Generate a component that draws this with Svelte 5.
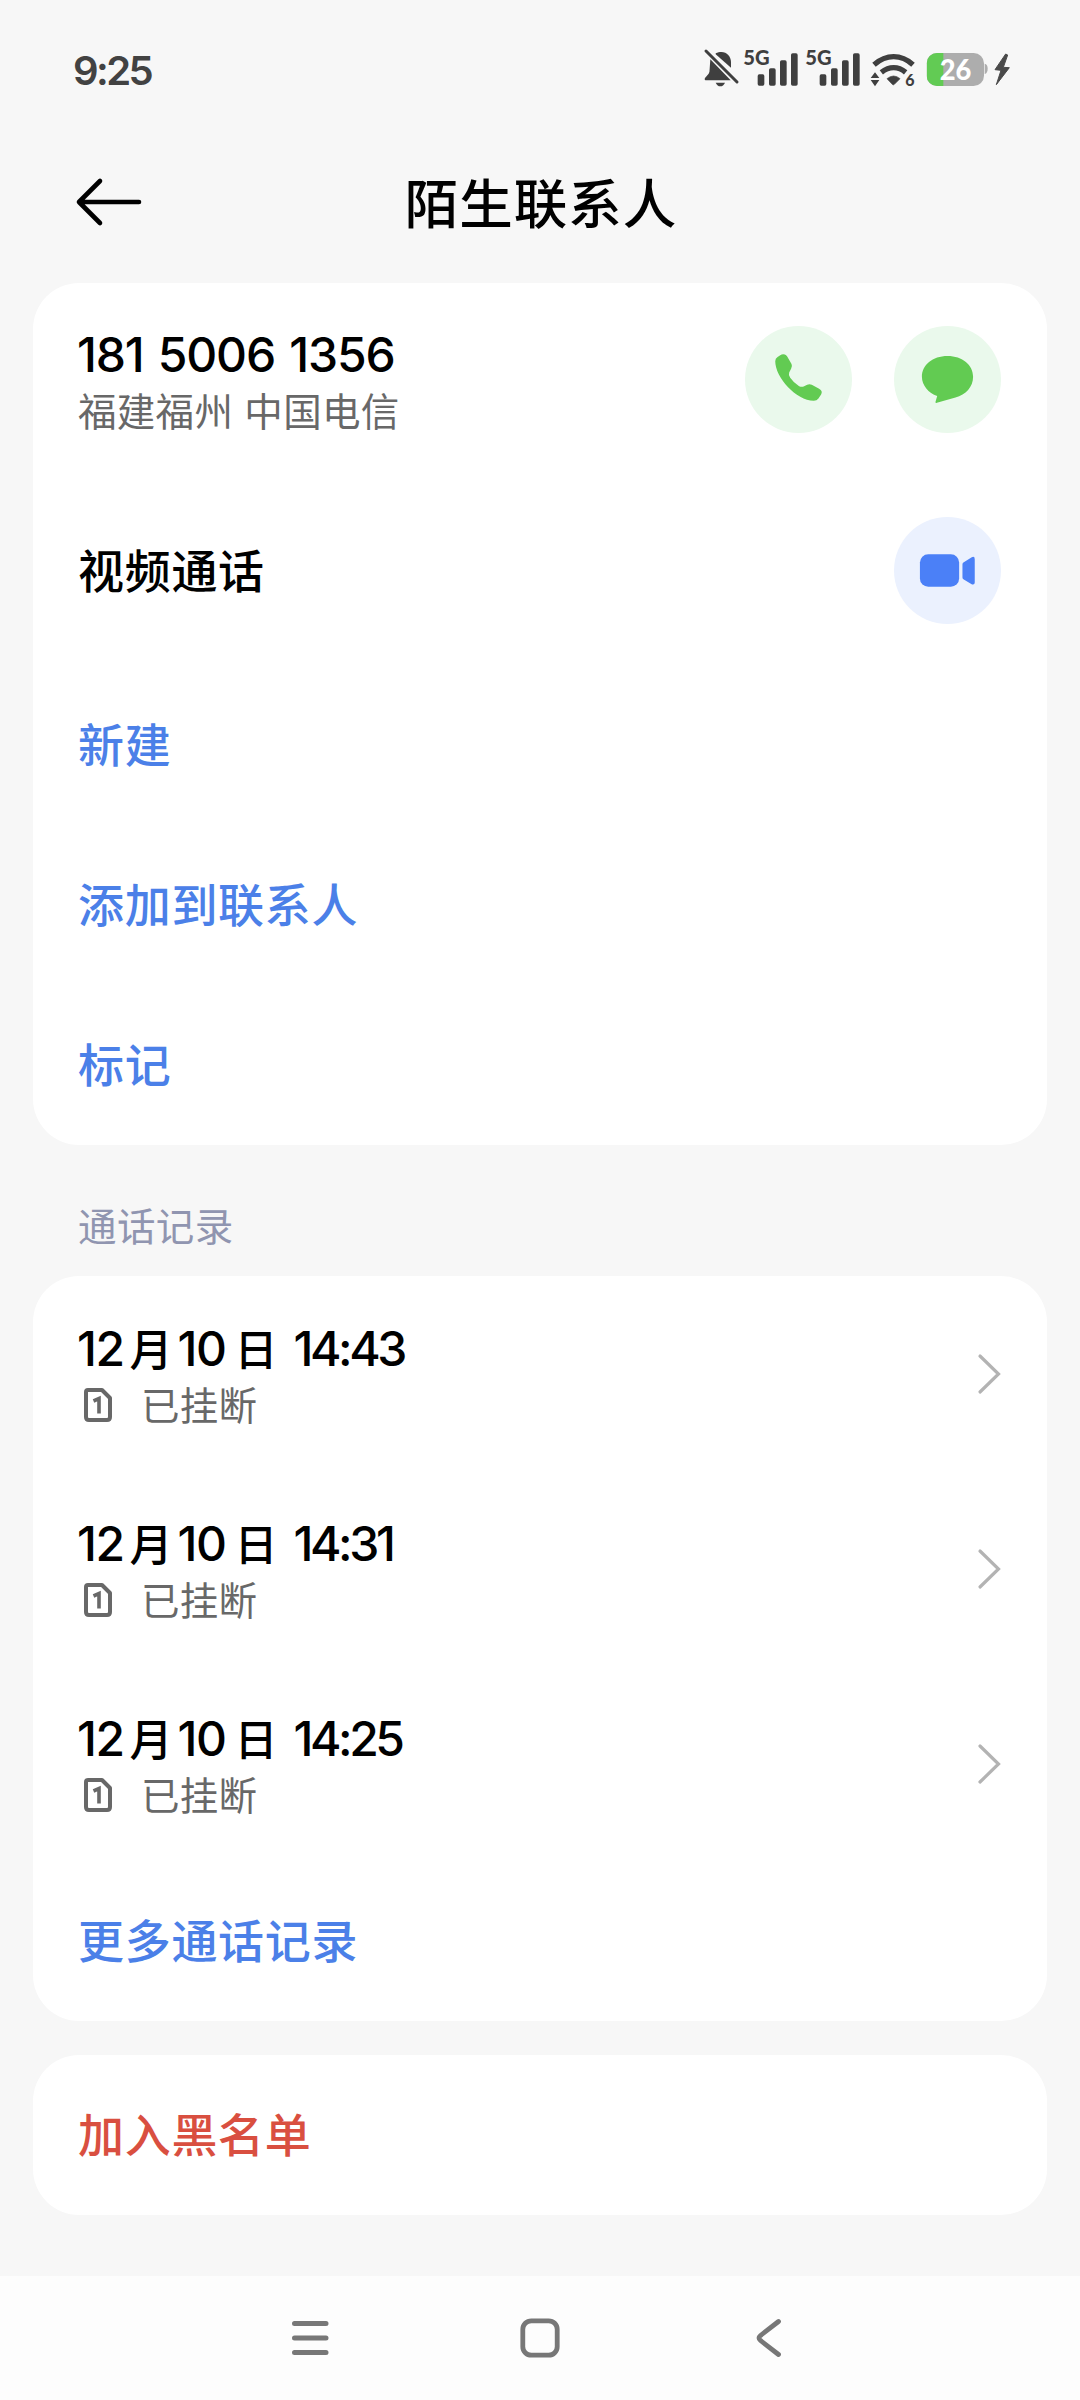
<script lang="ts">
  const actions = ['新建', '添加到联系人', '标记'];
  const calls = ['14:43', '14:31', '14:25'];
  const bars = [
    { x: 0, y: 133 },
    { x: 34, y: 115 },
    { x: 67, y: 91 },
    { x: 100, y: 70 }
  ];
</script>

<div class="screen">
  <header class="status">
    <span class="clock">9:25</span>
    <svg class="indicators" viewBox="60 48 936 126" width="312" height="42">
      <g fill="#3f3f3f">
        <path d="M107 70C131 58 153 72 153 97V113L107 73Z" />
        <path d="M91 88L152 151H76Q72 148 75 144L86 131Q89 127 89 116Z" />
        <path d="M107 158H135Q130 169 121 169T107 158Z" />
        <path d="M78 63L171 156" fill="none" stroke="#3f3f3f" stroke-width="9" stroke-linecap="round" />
        {#each [233, 419] as left}
          <text class="net" x={left - 43} y="105" textLength="79" lengthAdjust="spacingAndGlyphs">5G</text>
          {#each bars as b}
            <rect x={left + b.x} y={b.y} width="20" height={167 - b.y} rx="5" />
          {/each}
        {/each}
        <g fill="none" stroke="#3f3f3f" stroke-width="16">
          <path d="M582 104Q610 80 641 80T699 104" />
          <path d="M604 127Q622 113 641 113T677 127" />
        </g>
        <path d="M621 146Q641 130 660 146L643 163Q640 166 637 163Z" stroke="#3f3f3f" stroke-width="2" />
        <path d="M572 144L585 127L598 144ZM572 150H598L585 169Z" />
        <text class="gen" x="676" y="168">6</text>
      </g>
      <clipPath id="cell"><rect x="740" y="69" width="172" height="99" rx="31" /></clipPath>
      <g clip-path="url(#cell)">
        <rect x="740" y="69" width="172" height="99" fill="#adadad" />
        <rect x="740" y="69" width="50" height="99" fill="#62cb54" />
      </g>
      <path d="M914 101Q923 103 923 116T914 132Z" fill="#adadad" />
      <text class="charge" x="779" y="149" textLength="95" lengthAdjust="spacingAndGlyphs">26</text>
      <path d="M977 72L945 119L963 121L949 164L988 113L970 112L983 75Z" fill="#4a4a4a" stroke="#4a4a4a" stroke-width="3" stroke-linejoin="round" />
    </svg>
  </header>

  <div class="titlebar">
    <svg class="back" viewBox="0 0 68 50" width="68" height="50">
      <path d="M25 4L4 25L25 46M4 25H64" fill="none" stroke="#000" stroke-width="4.6" stroke-linecap="round" stroke-linejoin="round" />
    </svg>
    <h1>陌生联系人</h1>
  </div>

  <section class="card">
    <div class="row number">
      <div class="lines">
        <div class="main phone">181 5006 1356</div>
        <div class="sub">福建福州 中国电信</div>
      </div>
      <div class="buttons">
        <span class="round green">
          <svg viewBox="0 0 322 322" width="107" height="107">
            <path d="M106 88Q113 83 120 86Q124 87 127 92L140 114Q143 120 139 128L133 140Q130 148 136 156Q147 172 163 181Q171 185 178 181L187 177Q194 173 201 177L223 189Q235 196 229 206L221 218Q216 225 207 225C154 224 91 155 91 106Q91 97 98 93Z" fill="#62cb52" />
          </svg>
        </span>
        <span class="round green">
          <svg viewBox="0 0 322 322" width="107" height="107">
            <path d="M161 90C206 90 238 117 238 153C238 184 216 207 185 215L129 231Q124 233 125 228L130 211C104 202 84 179 84 153C84 117 116 90 161 90Z" fill="#62cb52" />
          </svg>
        </span>
      </div>
    </div>
    <div class="row video">
      <span class="label">视频通话</span>
      <span class="round blue">
        <svg viewBox="0 0 322 322" width="107" height="107">
          <rect x="78" y="112" width="118" height="98" rx="25" fill="#4b80f7" />
          <path d="M206 142Q206 138 210 136L234 121Q243 117 243 127V197Q243 205 235 203L210 188Q206 186 206 182Z" fill="#4b80f7" />
        </svg>
      </span>
    </div>
    {#each actions as a}
      <div class="row link">{a}</div>
    {/each}
  </section>

  <h2>通话记录</h2>

  <section class="card">
    {#each calls as time}
      <div class="row call">
        <div class="lines">
          <div class="main"><span class="num">12</span><span class="month">月</span><span class="num">10</span><span class="day">日</span><span class="time">{time}</span></div>
          <div class="sub state">
            <svg viewBox="0 0 30 36" width="30" height="36">
              <path d="M5 3H19L27 11V30Q27 33 24 33H6Q3 33 3 30V5Q3 3 5 3Z" fill="none" stroke="#686868" stroke-width="4" stroke-linejoin="round" />
              <path d="M10.5 14L16 11.5V26.5" fill="none" stroke="#686868" stroke-width="3.6" />
            </svg>
            <span>已挂断</span>
          </div>
        </div>
        <svg class="chevron" viewBox="0 0 24 42" width="24" height="42">
          <path d="M3 3L21.500 21L3 39" fill="none" stroke="#b3b3b3" stroke-width="3.2" stroke-linecap="round" />
        </svg>
      </div>
    {/each}
    <div class="row link">更多通话记录</div>
  </section>

  <section class="card block">
    <div class="row link danger">加入黑名单</div>
  </section>

  <nav>
    <svg viewBox="0 0 40 44" width="40" height="44">
      <path d="M4.500 7.500H36M4.500 22H36M4.500 36.500H36" stroke="#777" stroke-width="5" stroke-linecap="round" />
    </svg>
    <svg viewBox="0 0 40 44" width="40" height="44">
      <rect x="2.800" y="4.800" width="34.400" height="34.400" rx="8.500" fill="none" stroke="#777" stroke-width="4.800" />
    </svg>
    <svg viewBox="0 0 40 44" width="40" height="44">
      <path d="M28.500 5.500L10.500 19.500Q7.500 22 10.500 24.500L28.500 38.500" fill="none" stroke="#777" stroke-width="4.800" stroke-linecap="round" />
    </svg>
  </nav>
</div>

<style>
  :global(body) {
    margin: 0;
  }
  .screen {
    box-sizing: border-box;
    width: 1080px;
    height: 2400px;
    display: flex;
    flex-direction: column;
    background: #f7f7f7;
    color: #000;
    font-family: Inter, 'Noto Sans CJK SC', sans-serif;
  }
  svg {
    display: block;
    flex: none;
  }
  .status {
    height: 140px;
    box-sizing: border-box;
    padding: 0 68px 0 73px;
    display: flex;
    align-items: center;
    justify-content: space-between;
  }
  .clock {
    font-size: 40px;
    font-weight: 600;
    color: #424242;
    letter-spacing: -2.600px;
  }
  .indicators {
    margin-bottom: 6px;
    overflow: visible;
  }
  .net {
    font: 900 62px Lato, sans-serif;
  }
  .gen {
    font: 900 48px Lato, sans-serif;
  }
  .charge {
    font: 900 83px Lato, sans-serif;
    fill: #fff;
  }
  .titlebar {
    height: 143px;
    padding: 0 75px;
    display: grid;
    grid-template-columns: 68px 1fr 68px;
    align-items: start;
  }
  .back {
    margin-top: 37px;
  }
  h1 {
    margin: 25px 0 0;
    line-height: 80px;
    text-align: center;
    font-size: 53.500px;
    font-weight: 500;
    letter-spacing: 1px;
    text-indent: 2px;
  }
  .card {
    margin: 0 33px;
    border-radius: 46px;
    background: #fff;
  }
  .row {
    box-sizing: border-box;
    padding: 0 46px 0 45px;
    display: flex;
    align-items: center;
    justify-content: space-between;
  }
  .number {
    height: 193px;
  }
  .number .lines {
    margin-top: 5px;
  }
  .video {
    height: 189px;
  }
  .label,
  .link {
    font-size: 46px;
    line-height: 60px;
    font-weight: 500;
    letter-spacing: 0.7px;
  }
  .link {
    height: 160px;
    color: #4b80e8;
  }
  .danger {
    color: #d94f40;
  }
  .main {
    height: 60px;
    line-height: 60px;
    font-size: 48px;
    font-weight: 500;
    white-space: nowrap;
  }
  .phone {
    height: 59px;
    padding-top: 1px;
    margin-left: -1px;
    letter-spacing: -1.200px;
    word-spacing: 2.800px;
  }
  .num {
    margin-left: -1px;
    letter-spacing: -1.500px;
  }
  .time {
    letter-spacing: -3.400px;
  }
  .sub {
    height: 56px;
    line-height: 56px;
    font-size: 38.500px;
    letter-spacing: 0.3px;
    color: #686868;
    white-space: nowrap;
  }
  .buttons {
    display: flex;
    gap: 42px;
  }
  .round {
    width: 107px;
    height: 107px;
    border-radius: 50%;
  }
  .green {
    background: #eaf9ec;
  }
  .blue {
    background: #ebf1fe;
  }
  h2 {
    margin: 0 78px;
    height: 131px;
    box-sizing: border-box;
    padding-top: 52px;
    line-height: 60px;
    font-size: 38.500px;
    font-weight: 400;
    letter-spacing: 0.4px;
    color: #9095b0;
  }
  .call {
    height: 195px;
  }
  .call .lines {
    margin-top: 4px;
  }
  .month,
  .day {
    font-size: 43px;
  }
  .month {
    margin: 0 6px;
  }
  .day {
    margin: 0 16px 0 9px;
  }
  .state {
    display: flex;
    align-items: center;
    gap: 28px;
    padding-left: 5px;
    height: 54px;
  }
  .state svg {
    margin-bottom: 2px;
  }
  .block {
    margin-top: 34px;
  }
  nav {
    height: 124px;
    margin-top: auto;
    background: #fdfdfd;
    display: flex;
    align-items: center;
    justify-content: center;
    gap: 190px;
  }
</style>
